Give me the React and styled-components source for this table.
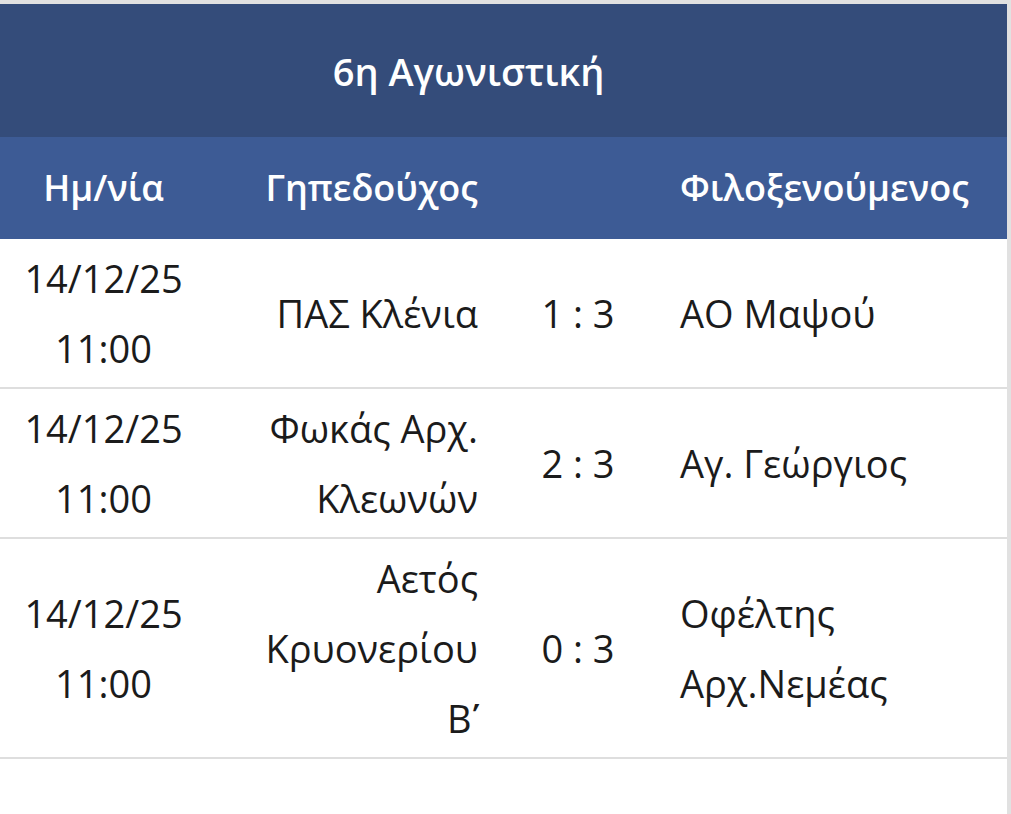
import React from 'react'
import styled, { createGlobalStyle } from 'styled-components'

const GlobalStyle = createGlobalStyle`
  html, body {
    margin: 0;
    padding: 0;
    background: #ffffff;
  }
  body {
    font-family: "Open Sans", "Noto Sans", "DejaVu Sans", sans-serif;
  }
`

const matches = [
  { date: '14/12/25', time: '11:00', home: 'ΠΑΣ Κλένια', score: '1 : 3', away: 'ΑΟ Μαψού' },
  { date: '14/12/25', time: '11:00', home: 'Φωκάς Αρχ. Κλεωνών', score: '2 : 3', away: 'Αγ. Γεώργιος' },
  { date: '14/12/25', time: '11:00', home: 'Αετός Κρυονερίου Β\u0374', score: '0 : 3', away: 'Οφέλτης Αρχ.Νεμέας' },
]

const App = () => {
  return (
    <Page>
      <GlobalStyle />
      <Table>
        <Title>6η Αγωνιστική</Title>
        <HeadRow>
          <Cell $align="center">Ημ/νία</Cell>
          <Cell $align="right">Γηπεδούχος</Cell>
          <Cell $align="center"></Cell>
          <Cell $align="left">Φιλοξενούμενος</Cell>
        </HeadRow>
        {matches.map((m, i) => (
          <Row key={i}>
            <Cell $align="center">
              {m.date}
              <br />
              {m.time}
            </Cell>
            <Cell $align="right">{m.home}</Cell>
            <Cell $align="center">{m.score}</Cell>
            <Cell $align="left">{m.away}</Cell>
          </Row>
        ))}
        <Filler />
      </Table>
    </Page>
  )
}

export default App

const Page = styled.div`
  width: 1011px;
  height: 814px;
  overflow: hidden;
  border-top: 4px solid #e1e1e1;
  box-sizing: border-box;
`

const Table = styled.div`
  width: 1007px;
  height: 100%;
  border-right: 4px solid #e1e1e1;
  display: flex;
  flex-direction: column;
`

const Title = styled.div`
  height: 133px;
  background: #344c7a;
  color: #ffffff;
  font-size: 38px;
  font-weight: 600;
  display: flex;
  align-items: center;
  justify-content: center;
  padding-right: 70px;
`

const grid = `
  display: grid;
  grid-template-columns: 207px 283px 176px 1fr;
  align-items: center;
`

const HeadRow = styled.div`
  ${grid}
  height: 102px;
  background: #3d5b95;
  color: #ffffff;
  font-size: 36px;
  font-weight: 600;
  padding-bottom: 2px;
  box-sizing: border-box;
`

const Row = styled.div`
  ${grid}
  padding: 4px 0;
  border-bottom: 2px solid #dedede;
  color: #1b1b1b;
  font-size: 38px;
  line-height: 70px;
`

const Cell = styled.div`
  text-align: ${p => p.$align};
  padding: ${p => (p.$align === 'right' ? '0 12px 0 40px' : p.$align === 'left' ? '0 0 0 14px' : '0')};
`

const Filler = styled.div`
  flex: 1;
`
